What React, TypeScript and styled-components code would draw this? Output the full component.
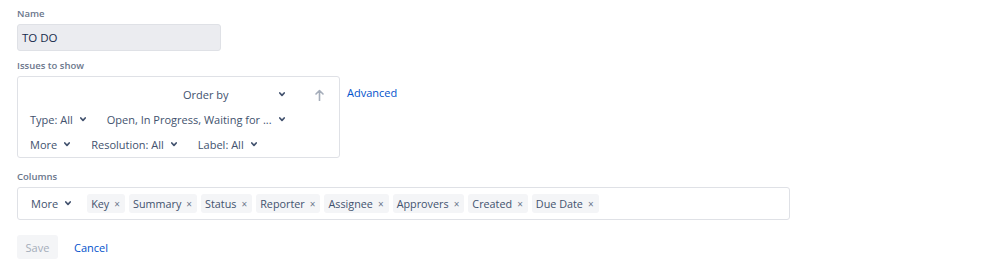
import React from 'react';
import styled, { createGlobalStyle } from 'styled-components';

const GlobalStyle = createGlobalStyle`
  html, body {
    margin: 0;
    padding: 0;
    background: #ffffff;
  }
  body {
    font-family: "Open Sans", "Noto Sans", sans-serif;
    color: #172b4d;
  }
`;

const Page = styled.div`
  padding: 5px 17px 0;
  width: 999px;
  height: 274px;
  box-sizing: border-box;
`;

const Field = styled.div`
  display: flex;
  flex-direction: column;
`;

const Label = styled.div`
  font-size: 9.5px;
  line-height: 14px;
  font-weight: 600;
  color: #6b778c;
  padding-top: 2px;
  margin-bottom: 3px;
`;

const NameInput = styled.div`
  width: 204px;
  height: 27px;
  box-sizing: border-box;
  background: #ebecf0;
  border: 1px solid #dfe1e6;
  border-radius: 3px;
  padding: 0 4px;
  display: flex;
  align-items: center;
  font-size: 11.5px;
  color: #172b4d;
  margin-bottom: 6px;
`;

const FilterRow = styled.div`
  display: flex;
  align-items: flex-start;
  gap: 7px;
  margin-bottom: 10px;
`;

const Box = styled.div<{ $width: number; $height: number }>`
  width: ${({ $width }) => $width}px;
  height: ${({ $height }) => $height}px;
  box-sizing: border-box;
  border: 1px solid #dfe1e6;
  border-radius: 3px;
  background: #fff;
`;

const FilterBox = styled(Box)`
  display: flex;
  flex-direction: column;
  padding: 5px 0 0 12px;
`;

const Line = styled.div<{ $end?: boolean }>`
  display: flex;
  align-items: center;
  height: 25px;
  gap: ${({ $end }) => ($end ? '14px' : '21px')};
  justify-content: ${({ $end }) => ($end ? 'flex-end' : 'flex-start')};
`;

const Dropdown = styled.div<{ $width?: number }>`
  display: flex;
  align-items: center;
  gap: 7px;
  font-size: 11px;
  color: #42526e;
  white-space: nowrap;
  ${({ $width }) => ($width ? `width: ${$width}px; justify-content: space-between;` : '')}
`;

const SortButton = styled.div`
  width: 40px;
  display: flex;
  justify-content: center;
`;

const Link = styled.a`
  color: #0052cc;
  font-size: 11px;
  text-decoration: none;
  line-height: 14px;
  margin-top: 10px;
  cursor: pointer;
`;

const ColumnsBox = styled(Box)`
  display: flex;
  align-items: center;
  padding: 0 0 0 13px;
  gap: 16px;
  margin-bottom: 15px;
`;

const Chips = styled.div`
  display: flex;
  align-items: center;
  gap: 4px;
`;

const Chip = styled.div`
  display: flex;
  align-items: center;
  height: 19px;
  padding: 0 5px 0 4px;
  gap: 5px;
  background: #f4f5f7;
  border-radius: 3px;
  font-size: 10.8px;
  color: #42526e;
  white-space: nowrap;
`;

const Remove = styled.span`
  font-size: 10px;
  line-height: 1;
  color: #6b778c;
`;

const Actions = styled.div`
  display: flex;
  align-items: center;
  gap: 16px;
`;

const SaveButton = styled.button`
  height: 24px;
  width: 41px;
  border: none;
  border-radius: 3px;
  background: #f4f5f7;
  color: #a5adba;
  font-family: inherit;
  font-size: 11px;
  padding: 0;
  cursor: not-allowed;
`;

const CancelButton = styled.button`
  border: none;
  background: none;
  color: #0052cc;
  font-family: inherit;
  font-size: 11px;
  padding: 0;
  cursor: pointer;
`;

const Chevron = () => (
  <svg width="6" height="5" viewBox="0 0 6 5" fill="none">
    <path d="M0.8 1 L3 3.4 L5.2 1" stroke="#42526e" strokeWidth="1.7" strokeLinecap="round" strokeLinejoin="round" />
  </svg>
);

const ArrowUp = () => (
  <svg width="9" height="12" viewBox="0 0 9 12" fill="none">
    <path d="M4.5 11.5 V1.5 M1 5 L4.5 1.5 L8 5" stroke="#a5adba" strokeWidth="1.6" strokeLinecap="round" strokeLinejoin="round" />
  </svg>
);

const columns = ['Key', 'Summary', 'Status', 'Reporter', 'Assignee', 'Approvers', 'Created', 'Due Date'];

export default function App() {
  return (
    <>
      <GlobalStyle />
      <Page>
        <Field>
          <Label>Name</Label>
          <NameInput>TO DO</NameInput>
        </Field>

        <Field>
          <Label>Issues to show</Label>
          <FilterRow>
            <FilterBox $width={323} $height={82}>
              <Line $end>
                <Dropdown $width={102}>
                  Order by <Chevron />
                </Dropdown>
                <SortButton>
                  <ArrowUp />
                </SortButton>
              </Line>
              <Line>
                <Dropdown>
                  Type: All <Chevron />
                </Dropdown>
                <Dropdown>
                  Open, In Progress, Waiting for ... <Chevron />
                </Dropdown>
              </Line>
              <Line>
                <Dropdown>
                  More <Chevron />
                </Dropdown>
                <Dropdown>
                  Resolution: All <Chevron />
                </Dropdown>
                <Dropdown>
                  Label: All <Chevron />
                </Dropdown>
              </Line>
            </FilterBox>
            <Link>Advanced</Link>
          </FilterRow>
        </Field>

        <Field>
          <Label>Columns</Label>
          <ColumnsBox $width={773} $height={33}>
            <Dropdown>
              More <Chevron />
            </Dropdown>
            <Chips>
              {columns.map((c) => (
                <Chip key={c}>
                  {c}
                  <Remove>×</Remove>
                </Chip>
              ))}
            </Chips>
          </ColumnsBox>
        </Field>

        <Actions>
          <SaveButton disabled>Save</SaveButton>
          <CancelButton>Cancel</CancelButton>
        </Actions>
      </Page>
    </>
  );
}
